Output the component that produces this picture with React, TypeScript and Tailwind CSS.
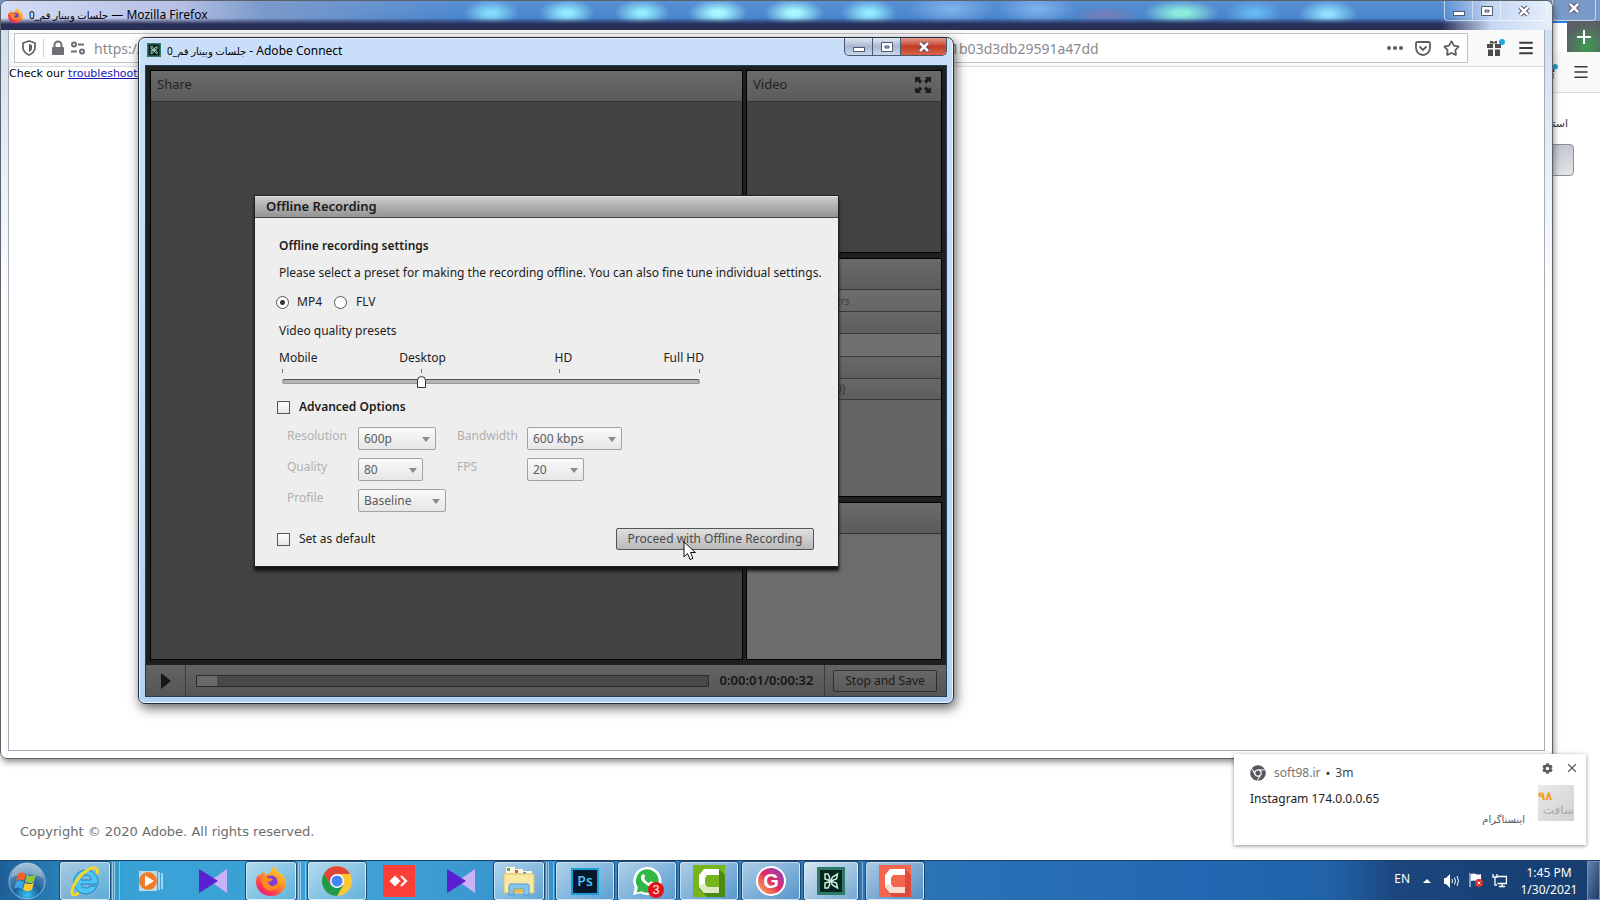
import type { ReactNode } from "react";
import { FaChrome, FaCog } from "react-icons/fa";
import { Menu, Star, X } from "lucide-react";

const MEETING = "جلسات وبینار قم_0";

function FirefoxIcon({ className }: { className: string }) {
  return (
    <svg viewBox="0 0 32 32" className={className} aria-hidden="true">
      <defs>
        <linearGradient id="ffox" x1="0.9" y1="0" x2="0.2" y2="1">
          <stop offset="0" stopColor="#ffe23c" />
          <stop offset="0.45" stopColor="#ff9422" />
          <stop offset="0.8" stopColor="#ff3750" />
          <stop offset="1" stopColor="#e31587" />
        </linearGradient>
      </defs>
      <path
        d="M30 12c-1-3-3-5-4-6 1 2 1 3 1 4-2-4-6-6-7-10-3 2-5 6-5 8-2 0-4 1-5 2-1-1-1-3-1-4-3 1-5 4-6 6 0-1 0-3 1-4C1 10 0 14 0 17a16 15 0 0 0 32 0c0-2-1-4-2-5z"
        fill="url(#ffox)"
      />
      <circle cx="16" cy="17" r="7" fill="#7a3fd4" />
      <path d="M5 13c3-2 6-2 8 0 2 0 4 0 5 1-1 2-3 2-5 3 0 3 3 5 6 4 3-1 5-3 5-6 2 6-2 11-8 11S6 21 5 13z" fill="#ff8a1f" />
    </svg>
  );
}

function ChromeLogo({ className }: { className: string }) {
  return (
    <svg viewBox="0 0 32 32" className={className} aria-hidden="true">
      <circle cx="16" cy="16" r="15" fill="#fcc934" />
      <path d="M3 8.500A15 15 0 0 0 16 31l6.500-11.200L10 20z" fill="#1e9a4c" />
      <path d="M3 8.500 9.500 19.800 16 9h13A15 15 0 0 0 3 8.500z" fill="#e0443a" />
      <circle cx="16" cy="16" r="7" fill="#fff" />
      <circle cx="16" cy="16" r="5.500" fill="#4285f4" />
    </svg>
  );
}

function ConnectLogo({ className }: { className: string }) {
  return (
    <svg viewBox="0 0 28 28" className={className} aria-hidden="true">
      <rect width="28" height="28" fill="#2f7a66" />
      <rect x="3" y="3" width="22" height="22" fill="#06251f" />
      <g fill="none" stroke="#c9f0dc" strokeWidth="1.500">
        <path d="M12.500 13.500 8 12V7h3l1.500 3zM12.500 14.500 8 16v5h3l1.500-3z" />
        <path d="m13.500 14 2-4 5-3-1 5zM13.500 14l2 4 5 3-1-5z" />
      </g>
    </svg>
  );
}

function StartOrb() {
  return (
    <svg viewBox="0 0 38 38" className="size-[38px]" aria-hidden="true">
      <defs>
        <radialGradient id="orb" cx="0.5" cy="0.9" r="0.9">
          <stop offset="0" stopColor="#35c5f2" />
          <stop offset="0.4" stopColor="#1a5f97" />
          <stop offset="1" stopColor="#7fa6c4" />
        </radialGradient>
      </defs>
      <circle cx="19" cy="19" r="18" fill="url(#orb)" stroke="#8fb9d8" />
      <path d="M3 16a16 15 0 0 1 32 0c-10-5-22-5-32 0z" fill="#fff" opacity="0.3" />
      <path d="M10 12c3-2 5-2 8 0l-2 7c-3-2-5-2-8 0z" fill="#f0602c" />
      <path d="M19 12.500c3 2 5 2 9 0l-2 7c-3 2-5 2-9 0z" fill="#8cc63e" />
      <path d="M8 20c3-2 5-2 8 0l-2 7c-3-2-5-2-8 0z" fill="#3fa4e8" />
      <path d="M17 20.500c3 2 5 2 9 0l-2 7c-3 2-5 2-9 0z" fill="#fcc62d" />
    </svg>
  );
}

function InternetExplorer() {
  return (
    <svg viewBox="0 0 32 32" className="size-8" aria-hidden="true">
      <path
        d="M17 5a12 12 0 1 0 11 16h-7a5 5 0 0 1-9-2h17A12 12 0 0 0 17 5zm-5 10a5 5 0 0 1 10 0z"
        fill="#4cc4f4"
        stroke="#1f7fc2"
      />
      <path d="M28 9c1-3 0-6-2-6-4-1-11 3-17 11C3 22 1 29 5 30c2 0 3-1 5-2" fill="none" stroke="#f4d62c" strokeWidth="3" />
    </svg>
  );
}

function MediaPlayer() {
  return (
    <svg viewBox="0 0 26 24" className="h-6 w-[26px]" aria-hidden="true">
      <rect x="1" y="2" width="18" height="20" fill="#bcd9ea" />
      <path d="M21 3v18M24 4v16" stroke="#c8e4f4" strokeWidth="1.500" />
      <circle cx="10" cy="12" r="9" fill="#f07d26" />
      <path d="M7 6.500v11L16 12z" fill="#fff" />
    </svg>
  );
}

function KmPlayer() {
  return (
    <svg viewBox="0 0 28 24" className="h-6 w-7" aria-hidden="true">
      <path d="M28 0v24L11 12z" fill="#c9b2f7" />
      <path d="M0 0v24l19-12z" fill="#5a1fd1" />
    </svg>
  );
}

function AnyDesk() {
  return (
    <svg viewBox="0 0 32 32" className="size-8" aria-hidden="true">
      <rect width="32" height="32" fill="#fb3f38" />
      <path d="m12 10.500 5.500 5.500-5.500 5.500L6.500 16z" fill="#fff" />
      <path d="m18 11 5 5-5 5" fill="none" stroke="#fff" strokeWidth="2.200" />
    </svg>
  );
}

function Explorer() {
  return (
    <svg viewBox="0 0 32 30" className="h-[30px] w-8" aria-hidden="true">
      <path d="M3 3h9l2 3h15v21H3z" fill="#f5e39a" />
      <path d="M3 1h9v6H3zM11 3h9v4h-9zM19 5h10v3H19z" fill="#fdf8e0" />
      <path d="M4 2h3v3H4z" fill="#4faf52" />
      <path d="M12 4h3v3h-3z" fill="#d9593c" />
      <path d="M20 6h3v2h-3z" fill="#5b9bd0" />
      <path d="M1 8h30v19H1z" fill="#f8e8a4" stroke="#dcc26a" />
      <path d="M6 29v-9q0-2 2-2h16q2 0 2 2v9h-5v-6H11v6z" fill="#86c6ee" stroke="#4f9cd0" />
      <path d="M11 23h10v3H11z" fill="#e6b84a" />
    </svg>
  );
}

function Camtasia({ from, to, shade }: { from: string; to: string; shade: string }) {
  return (
    <svg viewBox="0 0 32 32" className="size-8" aria-hidden="true">
      <rect width="32" height="32" fill={from} />
      <path d="M26 4 32 10v22H14l-8-8z" fill={to} />
      <path d="M12 11v10l3 2h11v-13H14z" fill={from} />
      <path d="M11 4h15v6H14l-2 3v6l2 3h12v6H11l-5-6V10z" fill="#fff" />
      <path d="m6 20 6-1 2 3h12v6H11l-5-6z" fill={shade} />
    </svg>
  );
}

function WhatsApp() {
  return (
    <span className="relative">
      <svg viewBox="0 0 32 32" className="size-[30px]" aria-hidden="true">
        <path d="M16 1a15 15 0 1 1-7 28l-8 2 2-8A15 15 0 0 1 16 1z" fill="#fff" />
        <path d="M16 3.500a12.500 12.500 0 1 1-6 23.500l-5 1.200L6.300 23A12.500 12.500 0 0 1 16 3.500z" fill="#2fb846" />
        <path d="M11 9c1-1 2-1 3 2 0 1-1 2-1 2 1 3 3 4 5 5l2-2c3 1 4 2 3 3-2 4-6 3-9 0-4-3-6-7-3-10z" fill="#fff" />
      </svg>
      <span className="absolute -right-[2px] -bottom-[2px] size-4 rounded-full bg-[#e3131b] text-center font-['Liberation_Sans',sans-serif] text-xs leading-4 text-white">
        3
      </span>
    </span>
  );
}

type TaskSlotProps = { label: string; children: ReactNode; open?: boolean; stack?: boolean; active?: boolean };

function TaskSlot({ label, children, open, stack, active }: TaskSlotProps) {
  if (!open) {
    return (
      <button aria-label={label} className="flex w-[62px] items-center justify-center pr-1">
        {children}
      </button>
    );
  }
  const width = stack ? "w-[50px]" : active ? "w-[54px]" : "w-[58px]";
  const fill = active ? "from-white/80 to-white/35" : "from-white/60 to-white/20";
  return (
    <div className="flex w-[62px] gap-[2px] pt-px">
      <button
        aria-label={label}
        className={`flex items-center justify-center rounded-[3px] border border-white/60 bg-linear-to-br shadow-[0_0_0_1px_#1d4a72] ${width} ${fill}`}
      >
        {children}
      </button>
      {stack && <span className="w-[3px] border-x border-white/50" />}
      {(stack || active) && <span className="w-[3px] border-r border-white/40" />}
    </div>
  );
}

function MinGlyph() {
  return (
    <svg viewBox="0 0 12 12" className="size-3" aria-hidden="true">
      <rect x="0.500" y="6.500" width="11" height="4" fill="#fff" stroke="#4d5b75" />
    </svg>
  );
}

function MaxGlyph() {
  return (
    <svg viewBox="0 0 12 12" className="size-3" aria-hidden="true">
      <path d="M.5 1.500h11v9H.5zM4 5v2h4V5z" fill="#fff" fillRule="evenodd" stroke="#4d5b75" />
    </svg>
  );
}

function CloseGlyph() {
  return (
    <svg viewBox="0 0 12 12" className="size-3" aria-hidden="true">
      <path d="m2 2 8 8M10 2l-8 8" stroke="#4d4557" strokeWidth="4.500" />
      <path d="m2 2 8 8M10 2l-8 8" stroke="#fff" strokeWidth="2.500" />
    </svg>
  );
}

function GiftIcon({ className }: { className: string }) {
  return (
    <svg viewBox="0 0 20 18" className={className} aria-hidden="true">
      <path d="M1 5h6v4H1zM9 5h6v4H9zM2 10.500h5V17H2zM9 10.500h5V17H9zM4 2h3l1 2 1-2h2v2.500H4z" fill="#4a4a4f" />
      <circle cx="16" cy="3" r="3" fill="#1ba8dc" />
    </svg>
  );
}

function BackWindow() {
  return (
    <div className="flex min-h-0 flex-1 flex-col bg-white">
      <div className="flex h-[21px] justify-end bg-[#7a99c8] pr-1">
        <button aria-label="Close" className="flex w-11 items-center justify-center rounded-b border border-t-0 border-white/60 pb-1">
          <CloseGlyph />
        </button>
      </div>
      <div className="flex h-[31px] justify-end border-t-2 border-[#2a7fe0] bg-white">
        <button aria-label="New tab" className="-mt-[2px] flex w-[33px] items-center justify-center bg-[radial-gradient(circle_at_60%_80%,#3f9a52,#5a6064_70%)]">
          <svg viewBox="0 0 16 16" className="size-4" aria-hidden="true">
            <path d="M8 1v14M1 8h14" stroke="#fff" strokeWidth="2" />
          </svg>
        </button>
      </div>
      <div className="flex h-[41px] items-center justify-end gap-3 border-b border-[#d8d8da] bg-[#f9f9fa] pr-[10px]">
        <GiftIcon className="h-4 w-5" />
        <button aria-label="Menu">
          <Menu className="size-[18px] text-[#38383d]" />
        </button>
      </div>
      <div className="flex flex-col items-end pt-[21px] pr-[26px]">
        <span className="pr-[6px] font-['DejaVu_Sans',sans-serif] text-[11px] leading-5 text-[#333]" dir="rtl">
          استفاده
        </span>
        <button aria-label="Enter" className="mt-[10px] h-8 w-24 rounded border border-[#8b8d94] bg-linear-to-br from-[#a9adb8] to-[#e4e5e9]" />
      </div>
      <footer className="mt-auto pb-[18px] pl-5 font-['DejaVu_Sans',sans-serif] text-[13px] leading-5 text-[#6c6c6c]">
        Copyright © 2020 Adobe. All rights reserved.
      </footer>
    </div>
  );
}

function FirefoxWindow() {
  return (
    <section className="absolute top-0 right-[47px] bottom-[141px] left-0 flex flex-col rounded-[7px] border border-[#5c6068] bg-linear-to-b from-[#c9dcf0] via-white via-40% to-white px-[7px] pb-[7px] shadow-[1px_3px_6px_#00000070]">
      <header className="-mx-[7px] flex h-[29px] shrink-0 items-start rounded-t-[6px] bg-[linear-gradient(90deg,transparent_1440px,#c4d6f2_1490px,#e6f0fb),linear-gradient(transparent_17px,#2b2f58_23px),radial-gradient(ellipse_28px_14px_at_490px_12px,#84dcfb_15%,transparent),radial-gradient(ellipse_28px_14px_at_566px_12px,#93ecff_15%,transparent),radial-gradient(ellipse_28px_14px_at_641px_12px,#93ecff_15%,transparent),radial-gradient(ellipse_30px_14px_at_717px_12px,#a5f6ff_20%,transparent),radial-gradient(ellipse_30px_14px_at_793px_12px,#a5f6ff_20%,transparent),radial-gradient(ellipse_28px_14px_at_868px_12px,#93ecff_15%,transparent),radial-gradient(ellipse_44px_16px_at_950px_8px,#80b4ec,transparent),radial-gradient(ellipse_40px_16px_at_1036px_8px,#80b4ec,transparent),radial-gradient(ellipse_36px_8px_at_1104px_14px,#7c7cb4,transparent),radial-gradient(ellipse_38px_13px_at_1180px_12px,#8cecdc_20%,transparent),radial-gradient(ellipse_28px_13px_at_1253px_12px,#66b8f2_15%,transparent),radial-gradient(ellipse_30px_14px_at_1327px_13px,#8fe0ff_15%,transparent),linear-gradient(90deg,#d4dcf4,#b4c0e4_180px,#7c9acb_260px,transparent_460px),linear-gradient(#5a90d4,#3d7dc6)] pl-[7px]">
        <FirefoxIcon className="mt-[7px] size-[15px]" />
        <h1 className="ml-[6px] font-['Noto_Sans','DejaVu_Sans',sans-serif] text-xs leading-7 text-black">
          <span className="text-[10px]">{MEETING}</span> — Mozilla Firefox
        </h1>
        <div className="mr-[5px] ml-auto flex h-5 divide-x divide-white/50 rounded-b border border-t-0 border-white/60">
          <button aria-label="Minimize" className="flex w-7 items-center justify-center">
            <MinGlyph />
          </button>
          <button aria-label="Maximize" className="flex w-7 items-center justify-center">
            <MaxGlyph />
          </button>
          <button aria-label="Close" className="flex w-[45px] items-center justify-center">
            <CloseGlyph />
          </button>
        </div>
      </header>
      <div className="flex min-h-0 flex-1 flex-col border border-t-0 border-[#a9adb3] bg-white">
        <div className="flex h-[37px] shrink-0 items-center border-b border-[#dcdcde] bg-[#f9f9fa] pl-[5px]">
          <div className="flex h-[30px] flex-1 items-center border border-[#c2c2c6] bg-white px-[7px] text-[#6f6f74]">
            <svg viewBox="0 0 14 16" className="h-4 w-[14px]" aria-hidden="true">
              <path d="M7 1 1 3v5c0 3 3 6 6 7 3-1 6-4 6-7V3z" fill="none" stroke="#5f5f63" strokeWidth="1.700" />
              <path d="M7 4v8c2-1 3-2 3-4V5z" fill="#5f5f63" />
            </svg>
            <span className="mr-[7px] ml-[7px] h-5 w-px bg-[#d4d4d8]" />
            <svg viewBox="0 0 14 16" className="h-4 w-[14px]" aria-hidden="true">
              <path d="M3.500 7V5a3.500 3.500 0 0 1 7 0v2" fill="none" stroke="#6f6f74" strokeWidth="2" />
              <rect x="1" y="7" width="12" height="8" rx="1" fill="#6f6f74" />
            </svg>
            <svg viewBox="0 0 16 14" className="ml-[5px] h-[14px] w-4" fill="none" stroke="#6f6f74" strokeWidth="2" aria-hidden="true">
              <circle cx="4" cy="3.500" r="2" />
              <path d="M8 3.500h6M1 10.500h6" />
              <circle cx="12" cy="10.500" r="2" />
            </svg>
            <input aria-label="Address" defaultValue="https://" className="ml-2 w-[857px] pt-px font-['Noto_Sans',sans-serif] text-sm text-[#8a8a8f] outline-none" />
            <span className="pt-px font-['Noto_Sans',sans-serif] text-sm text-[#8a8a8f]">1b03d3db29591a47dd</span>
            <div className="ml-auto flex items-center gap-3">
              <button aria-label="Page actions" className="flex gap-[2px]">
                <span className="size-1 rounded-full bg-[#5f5f63]" />
                <span className="size-1 rounded-full bg-[#5f5f63]" />
                <span className="size-1 rounded-full bg-[#5f5f63]" />
              </button>
              <button aria-label="Save to Pocket">
                <svg viewBox="0 0 16 15" className="h-[15px] w-4" fill="none" stroke="#5f5f63" strokeWidth="1.800" aria-hidden="true">
                  <path d="M1 2.500Q1 1 2.500 1h11Q15 1 15 2.500V7A7 7 0 0 1 1 7z" />
                  <path d="m4.500 5.500 3.500 3.500 3.500-3.500" />
                </svg>
              </button>
              <button aria-label="Bookmark">
                <Star className="size-[17px] text-[#5f5f63]" strokeWidth={2.5} />
              </button>
            </div>
          </div>
          <button aria-label="What's new" className="ml-[18px]">
            <GiftIcon className="h-[18px] w-5" />
          </button>
          <button aria-label="Menu" className="mr-[9px] ml-[11px]">
            <Menu className="size-[18px] text-[#38383d]" strokeWidth={2.5} />
          </button>
        </div>
        <p className="pt-px font-['DejaVu_Sans',sans-serif] text-[11px] leading-3 text-black">
          Check our{" "}
          <a href="#troubleshooting" className="text-[#1a12b8] underline">
            troubleshooting
          </a>
        </p>
      </div>
    </section>
  );
}

function Pod({ title, className, children }: { title?: string; className: string; children?: ReactNode }) {
  return (
    <div className={`flex flex-col border border-black ${className}`}>
      <div className="flex h-[31px] shrink-0 items-center justify-between border-b border-[#333] bg-linear-to-b from-[#6a6a6a] to-[#5b5b5b] px-[6px] pb-[2px] text-[13px] text-[#222]">
        {title}
        {title === "Video" && (
          <button aria-label="Full screen" className="mr-1">
            <svg viewBox="0 0 16 16" className="size-4" fill="#1c1c1c" aria-hidden="true">
              <path d="M0 0h6L4.500 1.500 7 4 5 6.500 2 4 0 6zM16 0v6l-2-2-3 2.500L9 4l2.500-2.500L10 0zM0 16v-6l2 2 3-2.500L7 12l-2.500 2.500L6 16zM16 16h-6l1.500-1.500L9 12l2-2.500 3 2.500 2-2z" />
            </svg>
          </button>
        )}
      </div>
      {children}
    </div>
  );
}

function Dropdown({ id, value, className }: { id: string; value: string; className: string }) {
  return (
    <div className={`relative h-[23px] ${className}`}>
      <select
        id={id}
        disabled
        defaultValue={value}
        className="size-full appearance-none rounded-[2px] border border-[#a2a2a2] bg-linear-to-b from-[#fafafa] to-[#e6e6e6] pl-[5px] text-xs text-[#5c5c5c] opacity-100"
      >
        <option>{value}</option>
      </select>
      <svg viewBox="0 0 8 5" className="pointer-events-none absolute top-[10px] right-[6px] h-[5px] w-2" aria-hidden="true">
        <path d="M0 0h8L4 5z" fill="#8b8b8b" />
      </svg>
    </div>
  );
}

const check = "size-[13px] appearance-none border border-[#555] bg-linear-to-b from-white to-[#e6e6e6]";
const radio =
  "size-[13px] appearance-none rounded-full border border-[#555] bg-white checked:bg-[radial-gradient(circle,#333_0_2px,#fff_3px)]";

function RecordingDialog() {
  return (
    <form className="absolute top-[157px] left-[115px] w-[585px] border border-[#222] bg-[#eee] text-xs leading-5 text-[#1c1c1c] shadow-[0_4px_3px_#141414]">
      <h2 className="h-[22px] border-t border-b border-t-[#e4e4e4] border-b-[#444] bg-linear-to-b from-[#cbcbcb] to-[#949494] pl-[11px] text-[13px] leading-[19px] font-semibold">
        Offline Recording
      </h2>
      <div className="pt-[18px] pr-6 pb-4 pl-6">
        <h3 className="font-semibold">Offline recording settings</h3>
        <p className="mt-[7px] whitespace-nowrap">Please select a preset for making the recording offline. You can also fine tune individual settings.</p>
        <div className="-ml-[3px] mt-[9px] flex items-center">
          <input id="mp4" type="radio" name="format" defaultChecked className={radio} />
          <label htmlFor="mp4" className="ml-2">
            MP4
          </label>
          <input id="flv" type="radio" name="format" className={`ml-3 ${radio}`} />
          <label htmlFor="flv" className="ml-[9px]">
            FLV
          </label>
        </div>
        <label htmlFor="preset" className="mt-[9px] block">
          Video quality presets
        </label>
        <div className="mt-[7px] ml-[3px] w-[422px]">
          <div className="grid grid-cols-[1fr_2fr_2fr_1fr] text-center whitespace-nowrap">
            <span className="-ml-[3px] text-left">Mobile</span>
            <span>Desktop</span>
            <span>HD</span>
            <span className="flex justify-end">Full HD</span>
          </div>
          <div className="mt-px mr-1 grid h-1 grid-cols-3 border-x border-[#777]">
            <span className="border-r border-[#777]" />
            <span className="border-r border-[#777]" />
          </div>
          <div className="mt-[2px] -ml-1 grid h-[13px] items-center">
            <span className="mr-1 ml-1 h-[5px] rounded-full border border-t-[#555] border-[#999] bg-[#b4b4b4] [grid-area:1/1]" />
            <input
              id="preset"
              type="range"
              min={0}
              max={3}
              defaultValue={1}
              className="h-[13px] w-full appearance-none bg-transparent [grid-area:1/1] [&::-webkit-slider-thumb]:h-3 [&::-webkit-slider-thumb]:w-[9px] [&::-webkit-slider-thumb]:appearance-none [&::-webkit-slider-thumb]:rounded-t-[5px] [&::-webkit-slider-thumb]:border [&::-webkit-slider-thumb]:border-[#333] [&::-webkit-slider-thumb]:bg-white"
            />
          </div>
        </div>
        <div className="-ml-[2px] mt-[9px] flex items-center gap-[9px]">
          <input id="advanced" type="checkbox" className={check} />
          <label htmlFor="advanced" className="font-semibold">
            Advanced Options
          </label>
        </div>
        <div className="mt-[10px] ml-2 grid grid-cols-[71px_99px_70px_1fr] gap-y-2 leading-[18px] text-[#b0b0b0]">
          <label htmlFor="resolution">Resolution</label>
          <Dropdown id="resolution" value="600p" className="w-[78px]" />
          <label htmlFor="bandwidth">Bandwidth</label>
          <Dropdown id="bandwidth" value="600 kbps" className="w-[95px]" />
          <label htmlFor="quality">Quality</label>
          <Dropdown id="quality" value="80" className="w-[65px]" />
          <label htmlFor="fps">FPS</label>
          <Dropdown id="fps" value="20" className="w-[57px]" />
          <label htmlFor="profile">Profile</label>
          <Dropdown id="profile" value="Baseline" className="w-[88px]" />
        </div>
        <div className="-ml-[2px] mt-4 flex h-[22px] items-center gap-[9px]">
          <input id="default" type="checkbox" className={check} />
          <label htmlFor="default">Set as default</label>
          <button type="button" className="ml-auto h-[22px] w-[198px] rounded-[2px] border border-[#555] bg-linear-to-b from-[#e0e0e0] to-[#b9b9b9] text-[#4a4a4a]">
            Proceed with Offline Recording
          </button>
        </div>
      </div>
    </form>
  );
}

function ConnectWindow() {
  return (
    <section className="absolute top-[37px] left-[138px] flex h-[667px] w-[816px] flex-col rounded-[7px] border border-[#20303f] bg-linear-to-b from-[#c9def8] via-[#c3dcf7] to-[#b4d2f3] px-[6px] pb-[6px] font-['Noto_Sans','DejaVu_Sans',sans-serif] shadow-[2px_4px_12px_#000000a0,inset_0_0_0_1px_#eef6ff]">
      <header className="flex h-[27px] shrink-0 items-start">
        <ConnectLogo className="mt-[5px] ml-[2px] size-[14px]" />
        <h2 className="ml-[6px] text-xs leading-[25px] text-black">
          <span className="text-[10px]">{MEETING}</span> - Adobe Connect
        </h2>
        <div className="ml-auto flex h-[18px] divide-x divide-[#4b5a70] overflow-hidden rounded-b-[5px] border border-t-0 border-[#4b5a70] bg-linear-to-b from-[#dfe9f6] via-[#a9b8cf] to-[#c7d8ef]">
          <button aria-label="Minimize" className="flex w-7 items-center justify-center">
            <MinGlyph />
          </button>
          <button aria-label="Maximize" className="flex w-7 items-center justify-center">
            <MaxGlyph />
          </button>
          <button aria-label="Close" className="flex w-[45px] items-center justify-center bg-linear-to-b from-[#e39a8c] via-[#c33c25] to-[#d8624a]">
            <CloseGlyph />
          </button>
        </div>
      </header>
      <div className="flex min-h-0 flex-1 flex-col border border-[#26404f] bg-[#1d1f20]">
        <div className="flex min-h-0 flex-1 gap-[3px] px-1 pt-1 pb-[5px]">
          <Pod title="Share" className="flex-1 bg-[#424242]" />
          <div className="flex w-[196px] flex-col gap-[5px]">
            <Pod title="Video" className="h-[183px] bg-[#424242]" />
            <Pod className="h-[239px] bg-[#646464]">
              <div className="h-[22px] border-b border-[#3a3a3a] bg-linear-to-b from-[#6d6d6d] to-[#656565] pl-[88px] text-[10px] leading-[22px] text-[#3c3c3c]">ers</div>
              <div className="h-[22px] border-b border-[#3a3a3a] bg-linear-to-b from-[#686868] to-[#5e5e5e]" />
              <div className="h-[23px] border-b border-[#3a3a3a] bg-[#707070]" />
              <div className="h-[22px] border-b border-[#3a3a3a] bg-linear-to-b from-[#686868] to-[#5e5e5e]" />
              <div className="h-[21px] border-b border-[#3a3a3a] bg-linear-to-b from-[#686868] to-[#5e5e5e] pl-[88px] text-xs leading-5 text-[#333]">0)</div>
            </Pod>
            <Pod className="flex-1 bg-[#6c6c6c]" />
          </div>
        </div>
        <div className="flex h-[31px] shrink-0 items-center bg-linear-to-b from-[#646464] to-[#555]">
          <button aria-label="Play" className="flex h-full w-10 items-center justify-center border-r border-[#3c3c3c]">
            <svg viewBox="0 0 10 16" className="h-4 w-[10px]" aria-hidden="true">
              <path d="M0 0v16l10-8z" fill="#161616" />
            </svg>
          </button>
          <div className="ml-[10px] h-3 flex-1 border border-[#2b2b2b] bg-[#484848]">
            <div className="h-full w-5 bg-[#6a6a6a]" />
          </div>
          <span className="w-[115px] text-center text-[13px] font-semibold text-[#161616]">0:00:01/0:00:32</span>
          <div className="flex h-full items-center border-l border-[#3c3c3c] pr-[9px] pl-2">
            <button className="h-[22px] w-[104px] rounded-[2px] border border-[#2f2f2f] bg-linear-to-b from-[#686868] to-[#5a5a5a] text-xs text-[#1c1c1c]">Stop and Save</button>
          </div>
        </div>
      </div>
      <RecordingDialog />
      <svg viewBox="0 0 14 20" className="absolute top-[503px] left-[544px] h-5 w-[14px]" aria-hidden="true">
        <path d="M1 1v15l3.500-3.500L7 18.500l3-1.200-2.500-5.800h5z" fill="#fff" stroke="#111" />
      </svg>
    </section>
  );
}

function Notification() {
  return (
    <aside className="absolute right-[14px] bottom-[55px] flex h-[91px] w-[352px] justify-between bg-white font-['Noto_Sans','DejaVu_Sans',sans-serif] text-[13px] shadow-[0_1px_4px_#00000070]">
      <div className="flex flex-1 flex-col pt-[9px] pl-4">
        <div className="flex items-center leading-5 text-[#757575]">
          <FaChrome className="mr-2 size-4 text-[#55585c]" />
          <span className="text-xs leading-5">soft98.ir</span>
          <span className="mx-[5px] text-[#333]">•</span>
          <span className="text-xs leading-5 text-[#444]">3m</span>
        </div>
        <p className="mt-[6px] text-xs leading-5 text-[#222]">Instagram 174.0.0.0.65</p>
        <p dir="rtl" className="pr-[13px] text-[10px] leading-5 text-[#555]">
          اینستاگرام
        </p>
      </div>
      <div className="flex w-12 flex-col items-end pt-[7px] pr-3">
        <div className="flex items-center gap-3">
          <button aria-label="Settings">
            <FaCog className="size-[11px] text-[#5a5a5a]" />
          </button>
          <button aria-label="Dismiss" className="-mr-[5px]">
            <X className="size-[14px] text-[#5a5a5a]" />
          </button>
        </div>
        <div className="mt-[10px] flex size-9 flex-col items-start bg-linear-to-br from-[#e9e9e9] to-[#d2d2d2] font-['DejaVu_Sans',sans-serif]">
          <span className="pt-1 text-xs leading-[14px] font-bold text-[#f5a020]">۹۸</span>
          <span className="self-end text-xs leading-[14px] text-[#aaa]">سافت</span>
        </div>
      </div>
    </aside>
  );
}

function Taskbar() {
  return (
    <nav className="flex h-10 shrink-0 border-t border-[#1c3f63] bg-[linear-gradient(90deg,#1f5f98,#2a80b8_60px,#38a2d6_130px,#3fa0d4_400px,#3285c6_640px,#2a72b6_950px,#2268b2_1200px,#2162a8_1330px,#1b457c_1400px,#173d70)]">
      <button aria-label="Start" className="flex w-[60px] items-center pl-2">
        <StartOrb />
      </button>
      <TaskSlot label="Internet Explorer" open stack>
        <InternetExplorer />
      </TaskSlot>
      <TaskSlot label="Media Player">
        <MediaPlayer />
      </TaskSlot>
      <TaskSlot label="KMPlayer">
        <KmPlayer />
      </TaskSlot>
      <TaskSlot label="Firefox" open stack>
        <FirefoxIcon className="size-[30px]" />
      </TaskSlot>
      <TaskSlot label="Chrome" open>
        <ChromeLogo className="size-8" />
      </TaskSlot>
      <TaskSlot label="AnyDesk">
        <AnyDesk />
      </TaskSlot>
      <TaskSlot label="KMPlayer">
        <KmPlayer />
      </TaskSlot>
      <TaskSlot label="Explorer" open stack>
        <Explorer />
      </TaskSlot>
      <TaskSlot label="Photoshop" open>
        <span className="flex h-[27px] w-7 items-center justify-center border-2 border-[#1a9fd4] bg-[#06192c] font-['Open_Sans',sans-serif] text-sm font-semibold text-[#4fc4f5]">
          Ps
        </span>
      </TaskSlot>
      <TaskSlot label="WhatsApp" open>
        <WhatsApp />
      </TaskSlot>
      <TaskSlot label="Camtasia" open>
        <Camtasia from="#78b51c" to="#4d8a14" shade="#dcebc4" />
      </TaskSlot>
      <TaskSlot label="Gramblr" open>
        <span className="flex size-[30px] items-center justify-center rounded-full border-2 border-white bg-linear-to-bl from-[#8a2ac8] via-[#e0245e] to-[#fbb034] font-['Liberation_Sans',sans-serif] text-xl font-bold text-white">
          G
        </span>
      </TaskSlot>
      <TaskSlot label="Adobe Connect" open active>
        <ConnectLogo className="size-7" />
      </TaskSlot>
      <TaskSlot label="Camtasia Recorder" open>
        <Camtasia from="#f4654f" to="#e04a38" shade="#fbdcd4" />
      </TaskSlot>
      <div className="ml-auto flex items-center font-['Noto_Sans',sans-serif] text-xs text-white">
        <span className="mb-1">EN</span>
        <svg viewBox="0 0 8 4" className="ml-[13px] h-1 w-2" aria-hidden="true">
          <path d="M0 4h8L4 0z" fill="#fff" />
        </svg>
        <svg viewBox="0 0 16 14" className="ml-[13px] h-[14px] w-4" aria-hidden="true">
          <path d="M0 4h2l4-4v14l-4-4H0z" fill="#fff" />
          <path d="M8 5q1 2 0 4M10.500 3.500q2 3.500 0 7M13 2q3 5 0 10" fill="none" stroke="#fff" />
        </svg>
        <svg viewBox="0 0 14 15" className="ml-[9px] h-[15px] w-[14px]" aria-hidden="true">
          <path d="M1 0v14" stroke="#fff" />
          <path d="M2 1q3-1 5 0t5 0v7q-3 1-5 0T2 8z" fill="#fff" />
          <circle cx="10" cy="10" r="4" fill="#d9302c" />
          <path d="m8.500 8.500 3 3m0-3-3 3" stroke="#fff" />
        </svg>
        <svg viewBox="0 0 15 15" className="ml-[9px] h-[15px] w-[15px]" fill="none" stroke="#fff" strokeWidth="1.300" aria-hidden="true">
          <path d="M5 3.500h9.500v7H5.500M7 13.500h6M10 11v2M1 1v3h4V1M3 4v8h2" />
        </svg>
        <time className="ml-[9px] w-[66px] text-center leading-[17px]">
          1:45 PM
          <br />
          1/30/2021
        </time>
        <button aria-label="Show desktop" className="ml-[5px] h-full w-[13px] border border-[#6f8fb4] bg-linear-to-br from-[#6483aa] to-[#1c3c68]" />
      </div>
    </nav>
  );
}

export default function App() {
  return (
    <div className="relative flex h-screen flex-col overflow-hidden bg-white">
      <BackWindow />
      <FirefoxWindow />
      <ConnectWindow />
      <Notification />
      <Taskbar />
    </div>
  );
}
